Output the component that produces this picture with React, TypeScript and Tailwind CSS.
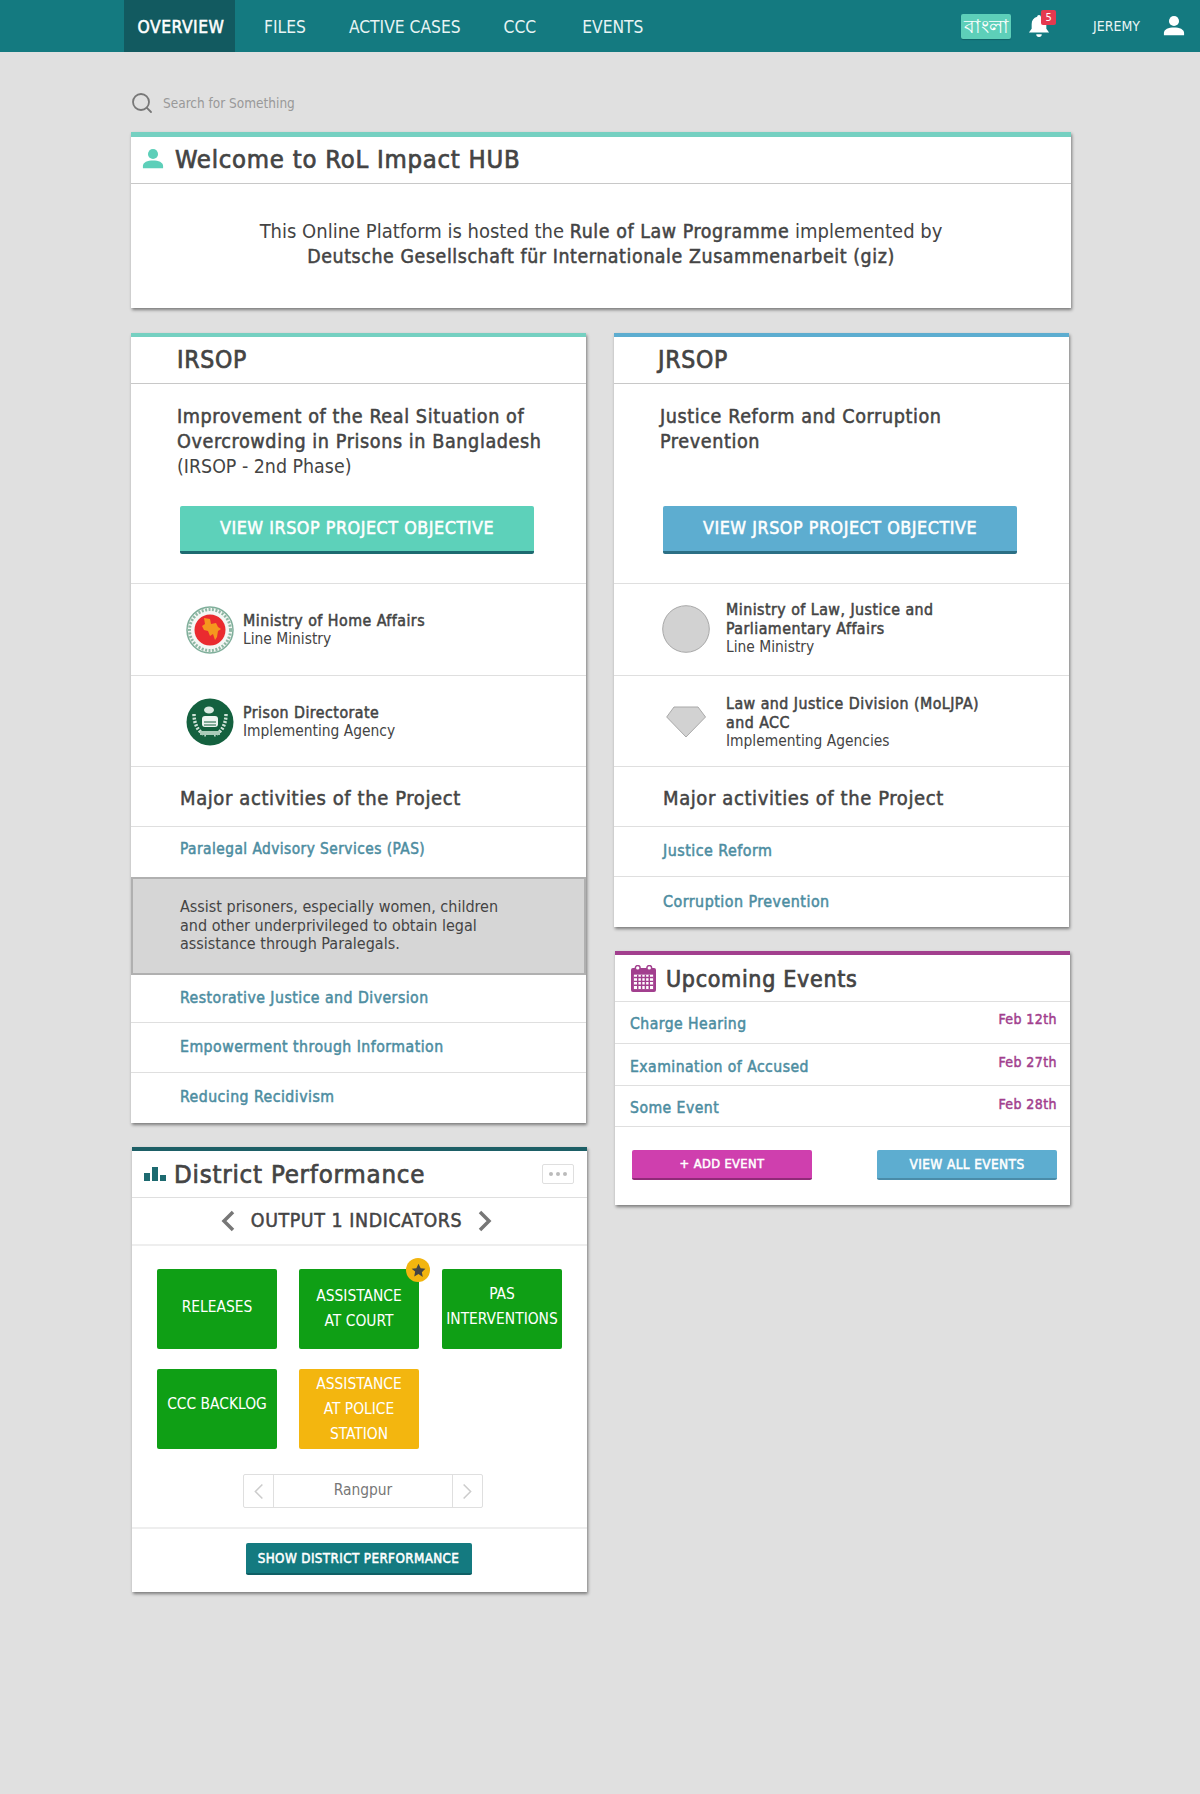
import React from "react";
import { Search } from "lucide-react";

const B = "font-normal tracking-[0.03em] [-webkit-text-stroke:0.5px_currentColor]";
const T = "font-normal tracking-[0.03em] [-webkit-text-stroke:0.7px_currentColor]";

const Person = ({ className }: { className: string }) => (
  <svg viewBox="0 0 24 24" className={className} fill="currentColor">
    <circle cx="12" cy="6.5" r="5.5" />
    <path d="M1 22v-2.5C1 15.5 6 13.5 12 13.5s11 2 11 6V22z" />
  </svg>
);

const Chevron = ({ dir, className, sw }: { dir: "l" | "r"; className: string; sw: number }) => (
  <svg viewBox="0 0 14 22" className={className} fill="none" stroke="currentColor" strokeWidth={sw}>
    <path d={dir === "l" ? "M12 2 3 11l9 9" : "M2 2l9 9-9 9"} />
  </svg>
);

const EmblemHome = () => (
  <svg viewBox="0 0 48 48" className="w-[48px] h-[48px] shrink-0">
    <circle cx="24" cy="24" r="23" fill="#f4f7f4" stroke="#7fae9a" strokeWidth="1.500" />
    <circle cx="24" cy="24" r="20.500" fill="none" stroke="#8fb8a4" strokeWidth="3" strokeDasharray="2 1.500" />
    <circle cx="24" cy="24" r="15.500" fill="#ea2b2f" />
    <path d="M18 12l6 1 1 5 5-1 2 4 3 2-3 2-1 6-2 3-2-6-3 2-2-5-4-1-2-4 3-2z" fill="#f5981e" />
  </svg>
);

const EmblemPrison = () => (
  <svg viewBox="0 0 48 48" className="w-[48px] h-[48px] shrink-0">
    <circle cx="24" cy="24" r="23.500" fill="#14613f" />
    <path d="M8 16c0 11 5 19 12 21M40 16c0 11-5 19-12 21" fill="none" stroke="#cfe3d8" strokeWidth="3.500" strokeDasharray="2 1.500" />
    <ellipse cx="23" cy="12" rx="5" ry="3.500" fill="#d9e9e0" />
    <rect x="16" y="18" width="16" height="11" rx="3" fill="#eef5f1" />
    <path d="M18 24h12M18 27h12" stroke="#14613f" />
    <path d="M14 33h20v4H14z" fill="#a9cbb9" />
  </svg>
);

const Circle = () => (
  <svg viewBox="0 0 48 48" className="w-[48px] h-[48px] shrink-0">
    <circle cx="24" cy="24" r="23.300" fill="#d2d2d2" stroke="#a8a8a8" />
  </svg>
);

const Diamond = () => (
  <svg viewBox="0 0 40 32" className="w-[40px] h-[32px] shrink-0">
    <path d="M8 1h24l7.500 10L20 31 .7 11z" fill="#d2d2d2" stroke="#a8a8a8" />
  </svg>
);

const Org = ({ icon, bold, sub, h, pl, gap }: { icon: React.ReactNode; bold: string[]; sub: string; h: string; pl: string; gap: string }) => (
  <div className={`flex items-center border-b border-[#dfdfdf] ${pl} ${h}`}>
    <div className="w-[50px] flex justify-center shrink-0">{icon}</div>
    <div className={`${gap} text-[15.400px] leading-[19px] text-[#444]`}>
      {bold.map((b) => (
        <div key={b} className={`${B} text-[15.800px]`}>{b}</div>
      ))}
      <div>{sub}</div>
    </div>
  </div>
);

const Activity = ({ t, h, size, last }: { t: string; h: string; size: string; last?: boolean }) => (
  <div className={`flex items-center pl-[49px] ${size} ${B} text-[#4d8da1] ${h} ${last ? "" : "border-b border-[#dfdfdf]"}`}>
    {t}
  </div>
);

const Project = ({
  name, accent, btn, btnEdge, lines, sub, btnText, orgs, children, pl,
}: {
  name: string; accent: string; btn: string; btnEdge: string; lines: string[]; sub?: string; btnText: string;
  orgs: React.ReactNode; children: React.ReactNode; pl: string;
}) => (
  <div className={`bg-white w-[455px] border-t-[4px] ${accent} shadow-[1px_2px_3px_rgba(0,0,0,0.45)]`}>
    <div className={`h-[47px] flex items-center border-b border-[#c8c8c8] text-[24.500px] ${T} text-[#444] ${pl}`}>{name}</div>
    <div className="h-[200px] border-b border-[#dfdfdf] pt-[20px]">
      <div className="pl-[46px] pr-[6px] text-[19.400px] leading-[25px] text-[#444] h-[75px]">
        {lines.map((l) => (
          <div key={l} className={`${B} text-[19.600px]`}>{l}</div>
        ))}
        {sub && <div>{sub}</div>}
      </div>
      <div className="pl-[49px] mt-[27px]">
        <div className={`w-[354px] h-[48px] rounded-[2px] border-b-[3px] flex items-center justify-center text-[17.800px] ${B} text-white ${btn} ${btnEdge}`}>
          {btnText}
        </div>
      </div>
    </div>
    {orgs}
    <div className={`h-[60px] flex items-center pl-[49px] pt-[3px] border-b border-[#dfdfdf] text-[20px] ${B} text-[#444]`}>
      Major activities of the Project
    </div>
    {children}
  </div>
);

const Tile = ({ lines, color, star, pb }: { lines: string[]; color: string; star?: boolean; pb?: string }) => (
  <div className={`relative w-[120px] h-[80px] rounded-[2px] text-white text-[15.400px] leading-[25px] flex flex-col items-center justify-center text-center ${color} ${pb ?? ""}`}>
    {lines.map((l) => (
      <div key={l}>{l}</div>
    ))}
    {star && (
      <div className="absolute -top-[11px] -right-[11px] w-[24px] h-[24px] rounded-full bg-[#f2b50f] flex items-center justify-center">
        <svg viewBox="0 0 24 24" className="w-[15px] h-[15px]" fill="#444">
          <path d="M12 1l3.400 7.200 7.600 1-5.600 5.400 1.400 7.800L12 17.600l-6.800 3.800 1.400-7.800L1 9.200l7.600-1z" />
        </svg>
      </div>
    )}
  </div>
);

const EventRow = ({ t, d, h, pt, dpt }: { t: string; d: string; h: string; pt: string; dpt: string }) => (
  <div className={`flex justify-between border-b border-[#dfdfdf] pl-[15px] pr-[13px] ${h}`}>
    <div className={`text-[15.600px] ${B} text-[#4d8da1] ${pt}`}>{t}</div>
    <div className={`text-[14px] ${B} text-[#a23f8e] ${dpt}`}>{d}</div>
  </div>
);

export default function App() {
  return (
    <div className="min-h-[1794px] bg-[#e0e0e0] font-['DejaVu_Sans_Condensed','DejaVu_Sans',sans-serif] text-[#444]">
      <nav className="h-[52px] bg-[#147a80] flex items-center text-white pl-[124px] pr-[15px]">
        <div className={`h-[52px] w-[111px] bg-[#125a60] flex items-center justify-center pt-[4px] pl-[3px] text-[17.300px] ${B}`}>OVERVIEW</div>
        <div className="flex items-center text-[17.300px] text-[#e8f4f4] ml-[29px] gap-[43px] pt-[4px]">
          <span>FILES</span>
          <span>ACTIVE CASES</span>
          <span>CCC</span>
          <span className="ml-[3px]">EVENTS</span>
        </div>
        <div className="ml-auto flex items-center">
          <div className="w-[50px] h-[25px] rounded-[2px] bg-[#5dcfb9] flex items-center justify-center text-[19px] text-white font-['Noto_Sans',sans-serif] shadow-[0_1px_1px_rgba(0,0,0,0.2)]">বাংলা</div>
          <div className="relative ml-[17px] w-[22px] h-[26px]">
            <svg viewBox="0 0 24 26" className="w-[22px] h-[26px]" fill="#fff">
              <path d="M12 1c1.300 0 2 1 2 2 4 1 6 4 6 8v5l3 4H1l3-4v-5c0-4 2-7 6-8 0-1 .7-2 2-2zM9 22h6a3 3 0 0 1-6 0z" />
            </svg>
            <div className="absolute -top-[3px] left-[13px] w-[15px] h-[15px] rounded-[2px] bg-[#e5394f] text-[11px] leading-[15px] text-center text-white">5</div>
          </div>
          <span className="ml-[43px] text-[14px] text-[#e8f4f4]">JEREMY</span>
          <Person className="ml-[23px] w-[22px] h-[22px] text-white" />
        </div>
      </nav>

      <main className="ml-[131px] w-[940px]">
        <div className="h-[80px] flex items-center pt-[22px]">
          <Search className="w-[24px] h-[24px] -ml-[1px] text-[#777]" strokeWidth={1.800} />
          <span className="ml-[9px] text-[13.500px] text-[#999]">Search for Something</span>
        </div>

        <section className="bg-white h-[176px] border-t-[5px] border-[#75d0c1] shadow-[1px_2px_3px_rgba(0,0,0,0.45)]">
          <div className="h-[47px] flex items-center border-b border-[#c8c8c8] pl-[11px] pb-[2px]">
            <Person className="w-[22px] h-[22px] text-[#5dcfb9]" />
            <h1 className={`ml-[11px] text-[25.400px] ${T} text-[#444]`}>Welcome to RoL Impact HUB</h1>
          </div>
          <p className="pt-[35px] text-center text-[20px] leading-[25px] text-[#444]">
            This Online Platform is hosted the <b className={`${B} text-[19.400px]`}>Rule of Law Programme</b> implemented by
            <br />
            <b className={`${B} text-[19.400px]`}>Deutsche Gesellschaft für Internationale Zusammenarbeit (giz)</b>
          </p>
        </section>

        <div className="flex gap-[27px] mt-[25px] items-start">
          <div className="w-[458px] flex flex-col">
            <Project
              name="IRSOP"
              pl="pl-[46px]"
              accent="border-[#75d0c1]"
              btn="bg-[#5dd1ba]"
              btnEdge="border-[#1d6a70]"
              lines={["Improvement of the Real Situation of", "Overcrowding in Prisons in Bangladesh"]}
              sub="(IRSOP - 2nd Phase)"
              btnText="VIEW IRSOP PROJECT OBJECTIVE"
              orgs={
                <>
                  <Org h="h-[92px]" pl="pl-[54px]" gap="ml-[8px]" icon={<EmblemHome />} bold={["Ministry of Home Affairs"]} sub="Line Ministry" />
                  <Org h="h-[91px] pt-[2px]" pl="pl-[54px]" gap="ml-[8px]" icon={<EmblemPrison />} bold={["Prison Directorate"]} sub="Implementing Agency" />
                </>
              }
            >
              <Activity t="Paralegal Advisory Services (PAS)" size="text-[15.300px]" h="h-[50px] pb-[6px]" last />
              <div className="h-[98px] bg-[#d6d6d6] border-2 border-[#b0b0b0] pl-[47px] flex flex-col justify-center text-[16px] leading-[18.500px] text-[#444]">
                <div>Assist prisoners, especially women, children</div>
                <div>and other underprivileged to obtain legal</div>
                <div>assistance through Paralegals.</div>
              </div>
              <Activity t="Restorative Justice and Diversion" size="text-[15.700px]" h="h-[48px] pb-[2px]" />
              <Activity t="Empowerment through Information" size="text-[15.700px]" h="h-[50px] pb-[2px]" />
              <Activity t="Reducing Recidivism" size="text-[15.700px]" h="h-[50px] pb-[2px]" last />
            </Project>

            <section className="mt-[24px] ml-[1px] w-[455px] h-[445px] bg-white border-t-[4px] border-[#1d5f66] shadow-[1px_2px_3px_rgba(0,0,0,0.45)] flex flex-col">
              <div className="h-[47px] shrink-0 flex items-center border-b border-[#dfdfdf] pl-[12px] pr-[13px]">
                <svg viewBox="0 0 22 14" className="w-[22px] h-[14px]" fill="#1d6a70">
                  <rect x="0" y="6" width="6" height="8" />
                  <rect x="8" y="0" width="6" height="14" />
                  <rect x="16" y="8" width="6" height="6" />
                </svg>
                <h2 className={`ml-[8px] text-[25.600px] ${T} text-[#444]`}>District Performance</h2>
                <div className="ml-auto w-[32px] h-[20px] border border-[#dfdfdf] rounded-[2px] flex items-center justify-center gap-[3px]">
                  <i className="w-[4px] h-[4px] rounded-full bg-[#bbb]" />
                  <i className="w-[4px] h-[4px] rounded-full bg-[#bbb]" />
                  <i className="w-[4px] h-[4px] rounded-full bg-[#bbb]" />
                </div>
              </div>
              <div className={`h-[48px] shrink-0 flex items-center justify-center pr-[6px] border-b-2 border-[#eee] text-[19.400px] ${B} text-[#444]`}>
                <Chevron dir="l" sw={3.500} className="w-[14px] h-[22px] text-[#777]" />
                <span className="mx-[16px]">OUTPUT 1 INDICATORS</span>
                <Chevron dir="r" sw={3.500} className="w-[14px] h-[22px] text-[#777]" />
              </div>
              <div className="grid grid-cols-[142px_143px_120px] gap-y-[20px] pl-[25px] pt-[23px]">
                <Tile color="bg-[#0f9f15]" lines={["RELEASES"]} pb="pb-[4px]" />
                <Tile color="bg-[#0f9f15]" lines={["ASSISTANCE", "AT COURT"]} star />
                <Tile color="bg-[#0f9f15]" lines={["PAS", "INTERVENTIONS"]} pb="pb-[4px]" />
                <Tile color="bg-[#0f9f15]" lines={["CCC BACKLOG"]} pb="pb-[10px]" />
                <Tile color="bg-[#f3b60f]" lines={["ASSISTANCE", "AT POLICE", "STATION"]} />
              </div>
              <div className="mt-[25px] ml-[111px] w-[240px] h-[34px] border border-[#dfdfdf] rounded-[2px] flex items-center text-[15.400px] text-[#777]">
                <div className="w-[30px] h-full flex items-center justify-center border-r border-[#dfdfdf]">
                  <Chevron dir="l" sw={2} className="w-[11px] h-[17px] text-[#ccc]" />
                </div>
                <div className="flex-1 text-center">Rangpur</div>
                <div className="w-[30px] h-full flex items-center justify-center border-l border-[#dfdfdf]">
                  <Chevron dir="r" sw={2} className="w-[11px] h-[17px] text-[#ccc]" />
                </div>
              </div>
              <div className="mt-[19px] border-t-2 border-[#eee] flex justify-center pt-[14px] pr-[2px]">
                <div className={`w-[226px] h-[32px] rounded-[2px] bg-[#147a80] border-b-2 border-[#0f5f65] flex items-center justify-center pt-[2px] text-[13.300px] whitespace-nowrap ${B} text-white`}>
                  SHOW DISTRICT PERFORMANCE
                </div>
              </div>
            </section>
          </div>

          <div className="w-[456px] flex flex-col -ml-[2px]">
            <Project
              name="JRSOP"
              pl="pl-[44px]"
              accent="border-[#5dadd0]"
              btn="bg-[#5dadd0]"
              btnEdge="border-[#2b6f85]"
              lines={["Justice Reform and Corruption", "Prevention"]}
              btnText="VIEW JRSOP PROJECT OBJECTIVE"
              orgs={
                <>
                  <Org h="h-[92px] pb-[2px]" pl="pl-[47px]" gap="ml-[15px]" icon={<Circle />} bold={["Ministry of Law, Justice and", "Parliamentary Affairs"]} sub="Line Ministry" />
                  <Org h="h-[91px] pt-[2px]" pl="pl-[47px]" gap="ml-[15px]" icon={<Diamond />} bold={["Law and Justice Division (MoLJPA)", "and ACC"]} sub="Implementing Agencies" />
                </>
              }
            >
              <Activity t="Justice Reform" size="text-[15.900px]" h="h-[50px] pb-[2px]" />
              <Activity t="Corruption Prevention" size="text-[15.900px]" h="h-[50px]" last />
            </Project>

            <section className="mt-[24px] ml-[1px] w-[455px] h-[254px] bg-white border-t-[4px] border-[#a23f8e] shadow-[1px_2px_3px_rgba(0,0,0,0.45)]">
              <div className="h-[47px] flex items-center border-b border-[#dfdfdf] pl-[16px]">
                <svg viewBox="0 0 26 28" className="w-[25px] h-[27px]">
                  <rect x="0" y="3" width="26" height="25" rx="2" fill="#a23f8e" />
                  <rect x="3" y="10" width="20" height="15" fill="#fff" />
                  <path d="M3 13h20M3 17h20M3 21h20M7 10v15M11 10v15M15 10v15M19 10v15" stroke="#a23f8e" strokeWidth="1.500" />
                  <circle cx="7" cy="3" r="2.500" fill="#fff" stroke="#a23f8e" strokeWidth="1.500" />
                  <circle cx="19" cy="3" r="2.500" fill="#fff" stroke="#a23f8e" strokeWidth="1.500" />
                </svg>
                <h2 className={`ml-[10px] pt-[2px] text-[23px] ${T} text-[#444]`}>Upcoming Events</h2>
              </div>
              <EventRow t="Charge Hearing" d="Feb 12th" h="h-[42px]" pt="pt-[11px]" dpt="pt-[7px]" />
              <EventRow t="Examination of Accused" d="Feb 27th" h="h-[42px]" pt="pt-[12px]" dpt="pt-[8px]" />
              <EventRow t="Some Event" d="Feb 28th" h="h-[41px]" pt="pt-[11px]" dpt="pt-[8px]" />
              <div className="flex justify-between pl-[17px] pr-[13px] pt-[23px]">
                <div className={`w-[180px] h-[30px] rounded-[2px] bg-[#cf3fae] border-b-2 border-[#8f2b78] flex items-center justify-center text-[12.800px] ${B} text-white`}>+ ADD EVENT</div>
                <div className={`w-[180px] h-[30px] rounded-[2px] bg-[#5dadd0] border-b-2 border-[#4a8ba8] flex items-center justify-center text-[13.500px] ${B} text-white`}>VIEW ALL EVENTS</div>
              </div>
            </section>
          </div>
        </div>
      </main>
    </div>
  );
}
